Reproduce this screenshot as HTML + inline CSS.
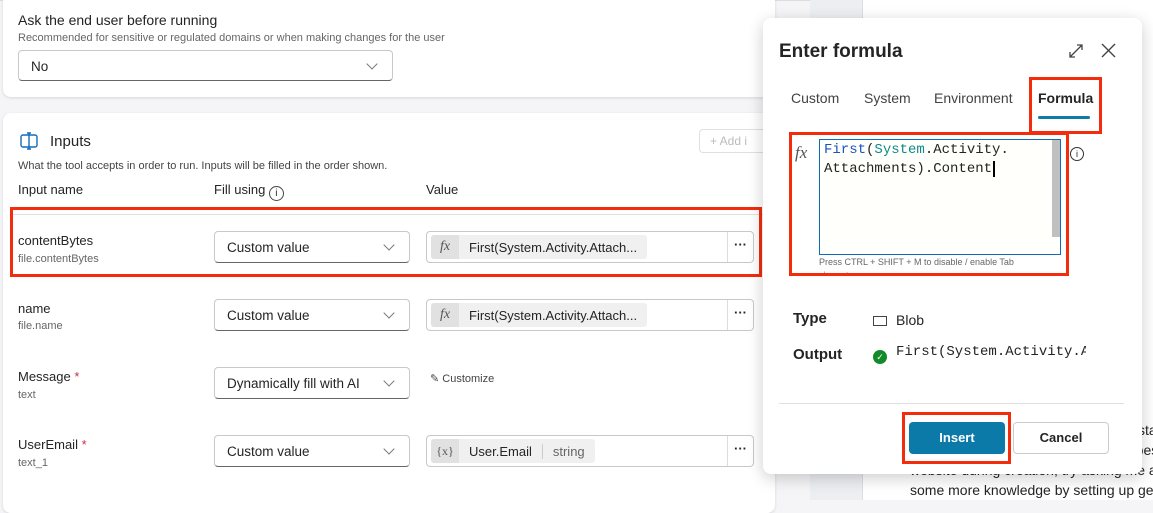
<!DOCTYPE html>
<html><head><style>
*{box-sizing:border-box;margin:0;padding:0}
body{width:1153px;height:500px;overflow:hidden;background:#f5f5f7;font-family:"Liberation Sans",sans-serif;color:#242424;position:relative}
.abs{position:absolute}
.card{position:absolute;background:#fff;border-radius:8px;box-shadow:0 1px 3px rgba(0,0,0,.12)}
.dd{position:absolute;height:32px;border:1px solid #c8c8c8;border-bottom:1px solid #666;border-radius:4px;background:#fff;font-size:13.5px;padding:8px 12px;color:#242424}
.dd:after{content:"";position:absolute;right:16px;top:9px;width:7px;height:7px;border-right:1px solid #777;border-bottom:1px solid #777;transform:rotate(45deg)}
.val{position:absolute;height:32px;border:1px solid #c8c8c8;border-radius:4px;background:#fff}
.chip{position:absolute;left:4px;top:3px;height:24px;background:#f0f0f0;border-radius:3px;font-size:13px;display:flex;align-items:center}
.chip .ic{width:28px;height:24px;background:#e1e1e1;display:flex;align-items:center;justify-content:center;font-family:"Liberation Serif",serif;font-style:italic;font-size:14px;color:#555;border-radius:3px 0 0 3px}
.chip .t{padding:0 10px}
.more{position:absolute;right:0;top:0;width:26px;height:30px;border-left:1px solid #ddd;font-size:13px;text-align:center;line-height:26px;font-weight:bold}
.nm{position:absolute;left:18px;font-size:13px}
.sub{position:absolute;left:18px;font-size:11px;color:#666}
.red{position:absolute;border:3px solid #f22c0c}
.star{color:#c4314b}
.mono{font-family:"Liberation Mono",monospace}
</style></head><body>
<div class="abs" style="left:0;top:0;width:810px;height:1px;background:#ddd"></div>
<div class="abs" style="left:810px;top:0;width:52px;height:500px;background:#eceef2"></div>
<div class="abs" style="left:862px;top:0;width:291px;height:500px;background:#fff;border-left:1px solid #ddd"></div>
<div class="abs" style="left:910px;top:420px;font-size:14px;color:#242424;line-height:20px;white-space:nowrap">information about your products and sta<br>requirements, and so that you know best<br>website during creation, try asking me a<br>some more knowledge by setting up ge</div>

<div class="card" style="left:3px;top:-8px;width:772px;height:105px"></div>
<div class="abs" style="left:18px;top:12px;font-size:14px">Ask the end user before running</div>
<div class="abs" style="left:18px;top:32px;font-size:11px;color:#666">Recommended for sensitive or regulated domains or when making changes for the user</div>
<div class="dd" style="left:18px;top:50px;width:375px;height:31px">No</div>

<div class="card" style="left:3px;top:113px;width:772px;height:400px"></div>
<svg class="abs" style="left:19px;top:131px" width="20" height="20" viewBox="0 0 20 20"><rect x="2" y="4" width="16" height="12" rx="2" fill="none" stroke="#0f6cbd" stroke-width="1.4"/><path d="M10 2v16M8 2h4M8 18h4" stroke="#0f6cbd" stroke-width="1.4" fill="none"/></svg>
<div class="abs" style="left:50px;top:133px;font-size:15px">Inputs</div>
<div class="abs" style="left:699px;top:129px;width:70px;height:24px;border:1px solid #e0e0e0;border-radius:4px;font-size:12px;color:#bbb;padding:4px 10px">+ Add i</div>
<div class="abs" style="left:18px;top:160px;font-size:11px;color:#444">What the tool accepts in order to run. Inputs will be filled in the order shown.</div>
<div class="abs" style="left:18px;top:182px;font-size:13px">Input name</div>
<div class="abs" style="left:214px;top:182px;font-size:13px">Fill using <span style="display:inline-block;width:15px;height:15px;border:1px solid #444;border-radius:50%;font-size:10px;text-align:center;line-height:13px;vertical-align:-2px">i</span></div>
<div class="abs" style="left:426px;top:182px;font-size:13px">Value</div>
<div class="abs" style="left:11px;top:214px;width:765px;height:1px;background:#e0e0e0"></div>

<div class="nm" style="top:233px">contentBytes</div><div class="sub" style="top:253px">file.contentBytes</div>
<div class="dd" style="left:214px;top:231px;width:196px">Custom value</div>
<div class="val" style="left:426px;top:231px;width:328px"><div class="chip"><span class="ic">fx</span><span class="t">First(System.Activity.Attach...</span></div><div class="more">···</div></div>
<div class="red" style="left:10px;top:207px;width:752px;height:70px"></div>

<div class="nm" style="top:301px">name</div><div class="sub" style="top:320px">file.name</div>
<div class="dd" style="left:214px;top:299px;width:196px">Custom value</div>
<div class="val" style="left:426px;top:299px;width:328px"><div class="chip"><span class="ic">fx</span><span class="t">First(System.Activity.Attach...</span></div><div class="more">···</div></div>

<div class="nm" style="top:369px">Message <span class="star">*</span></div><div class="sub" style="top:389px">text</div>
<div class="dd" style="left:214px;top:367px;width:196px">Dynamically fill with AI</div>
<div class="abs" style="left:430px;top:372px;font-size:11px;color:#444">✎ Customize</div>

<div class="nm" style="top:437px">UserEmail <span class="star">*</span></div><div class="sub" style="top:457px">text_1</div>
<div class="dd" style="left:214px;top:435px;width:196px">Custom value</div>
<div class="val" style="left:426px;top:435px;width:328px"><div class="chip"><span class="ic" style="font-style:normal;font-size:12px">{x}</span><span class="t" style="border-right:1px solid #ccc">User.Email</span><span class="t" style="color:#666">string</span></div><div class="more">···</div></div>

<div class="abs" style="left:763px;top:18px;width:379px;height:456px;background:#fff;border-radius:8px;box-shadow:0 4px 16px rgba(0,0,0,.2)"></div>
<div class="abs" style="left:779px;top:41px;font-size:19px;font-weight:bold;color:#242424">Enter formula</div>
<svg class="abs" style="left:1068px;top:43px" width="16" height="16" viewBox="0 0 16 16"><path d="M2 14L14 2M9 2h5v5M2 9v5h5" stroke="#444" stroke-width="1.3" fill="none"/></svg>
<svg class="abs" style="left:1101px;top:43px" width="15" height="15" viewBox="0 0 15 15"><path d="M1 1L14 14M14 1L1 14" stroke="#444" stroke-width="1.4"/></svg>
<div class="abs" style="left:791px;top:90px;font-size:14px;color:#424242">Custom</div>
<div class="abs" style="left:864px;top:90px;font-size:14px;color:#424242">System</div>
<div class="abs" style="left:934px;top:90px;font-size:14px;color:#424242">Environment</div>
<div class="abs" style="left:1038px;top:90px;font-size:14px;font-weight:bold">Formula</div>
<div class="abs" style="left:1038px;top:116px;width:52px;height:3px;background:#0f7ba8;border-radius:2px"></div>
<div class="red" style="left:1029px;top:77px;width:73px;height:57px"></div>
<div class="abs" style="left:795px;top:143px;font-family:'Liberation Serif',serif;font-style:italic;font-size:17px;color:#555">fx</div>
<div class="abs" style="left:819px;top:139px;width:242px;height:116px;border:1px solid #0f6cbd;background:#fffffc"></div>
<div class="abs" style="left:1052px;top:140px;width:8px;height:97px;background:#c0c0c0"></div>
<div class="abs mono" style="left:824px;top:141px;font-size:14px;line-height:19px;white-space:nowrap"><span style="color:#1a52c4">First</span>(<span style="color:#0f8a8a">System</span>.Activity.<br>Attachments).Content<span style="border-left:2px solid #000;margin-left:1px"></span></div>
<div class="abs" style="left:819px;top:257px;font-size:9px;color:#666;white-space:nowrap">Press CTRL + SHIFT + M to disable / enable Tab</div>
<div class="abs" style="left:819px;top:270px;font-size:9px;color:#999;height:6px;overflow:hidden">character</div>
<div class="red" style="left:789px;top:132px;width:280px;height:144px"></div>
<div class="abs" style="left:1070px;top:147px;width:14px;height:14px;border:1px solid #333;border-radius:50%;font-size:9px;text-align:center;line-height:12px">i</div>
<div class="abs" style="left:793px;top:310px;font-size:15px;font-weight:bold">Type</div>
<div class="abs" style="left:873px;top:316px;width:14px;height:10px;border:1px solid #444"></div>
<div class="abs" style="left:896px;top:312px;font-size:14px">Blob</div>
<div class="abs" style="left:793px;top:346px;font-size:15px;font-weight:bold">Output</div>
<div class="abs" style="left:873px;top:350px;width:14px;height:14px;border-radius:50%;background:#138a2a;color:#fff;font-size:9px;text-align:center;line-height:14px">✓</div>
<div class="abs mono" style="left:896px;top:344px;font-size:14px;width:190px;overflow:hidden;white-space:nowrap">First(System.Activity.A</div>
<div class="abs" style="left:779px;top:403px;width:345px;height:1px;background:#e0e0e0"></div>
<div class="abs" style="left:909px;top:422px;width:96px;height:32px;background:#0b7aa8;border-radius:4px;color:#fff;font-size:13px;font-weight:bold;text-align:center;line-height:32px">Insert</div>
<div class="abs" style="left:1013px;top:422px;width:96px;height:32px;border:1px solid #ccc;border-radius:4px;font-size:13px;font-weight:bold;text-align:center;line-height:30px;background:#fff">Cancel</div>
<div class="red" style="left:902px;top:412px;width:109px;height:52px"></div>
</body></html>
